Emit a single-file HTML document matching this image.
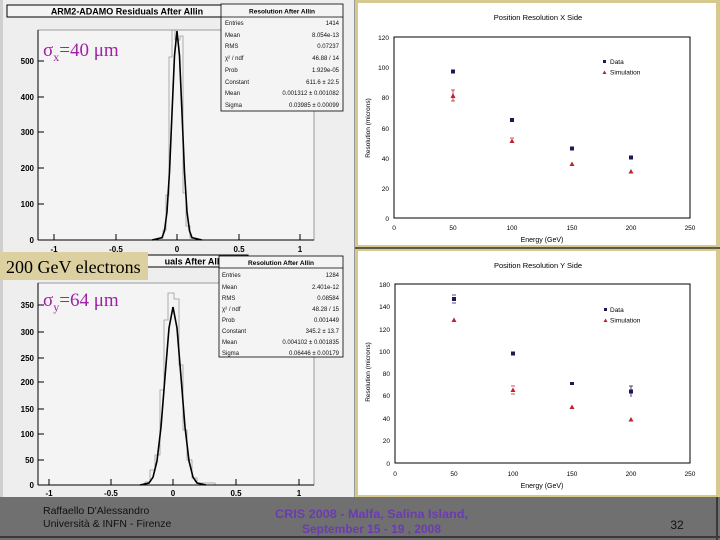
<!DOCTYPE html>
<html><head><meta charset="utf-8"><style>
html,body{margin:0;padding:0;width:720px;height:540px;overflow:hidden;background:#6f6f6f;}
svg text{font-family:"Liberation Sans",sans-serif;}
</style></head><body>
<svg width="720" height="540" xmlns="http://www.w3.org/2000/svg" style="position:absolute;left:0;top:0">
<rect x="0" y="0" width="354" height="497" fill="#eeeeee"/>
<rect x="0" y="0" width="3" height="497" fill="#cfcfcf"/>
<rect x="354" y="0" width="366" height="497" fill="#d6c98e"/>
<rect x="358" y="3" width="358" height="242" fill="#ffffff"/>
<rect x="358" y="251" width="358" height="244" fill="#ffffff"/>
<line x1="354" y1="248" x2="720" y2="248" stroke="#333" stroke-width="1.5"/>
<line x1="354.5" y1="0" x2="354.5" y2="497" stroke="#9a9a9a" stroke-width="1"/>
<rect x="0" y="497" width="720" height="43" fill="#707070"/>
<line x1="0" y1="537" x2="720" y2="537" stroke="#3a3a3a" stroke-width="2"/>
<line x1="717" y1="497" x2="717" y2="540" stroke="#3a3a3a" stroke-width="2"/>

<!-- Upper histogram -->
<rect x="38" y="30" width="276" height="210" fill="#f4f4f4" stroke="#888" stroke-width="0.8"/>
<polyline fill="none" stroke="#999" stroke-width="0.8" points="150,240 158,240 158,238 163,238 163,230 166,230 166,195 169,195 169,57 172,57 172,30 175,30 175,40 180,40 180,36 183,36 183,193 186,193 186,226 190,226 190,238 196,238 196,240 210,240"/>
<polyline fill="none" stroke="#000" stroke-width="1.6" points="152,240 162,237.7 164.5,230.8 167,211.8 169.5,172.1 172,113.1 174.5,55.7 177,31 179.5,55.7 182,113.1 184.5,172.1 187,211.8 189.5,230.8 192,237.7 202,240"/>
<g stroke="#000" stroke-width="1">
<line x1="38" y1="30" x2="38" y2="240"/><line x1="38" y1="240" x2="314" y2="240"/>
<line x1="38" y1="61" x2="44" y2="61"/><line x1="38" y1="97" x2="44" y2="97"/><line x1="38" y1="132" x2="44" y2="132"/><line x1="38" y1="168" x2="44" y2="168"/><line x1="38" y1="204" x2="44" y2="204"/>
<line x1="54" y1="240" x2="54" y2="234"/><line x1="116" y1="240" x2="116" y2="234"/><line x1="177" y1="240" x2="177" y2="234"/><line x1="239" y1="240" x2="239" y2="234"/><line x1="300" y1="240" x2="300" y2="234"/>
</g>
<g font-size="8" font-weight="bold" fill="#000" text-anchor="end">
<text x="34" y="64">500</text><text x="34" y="100">400</text><text x="34" y="135">300</text><text x="34" y="171">200</text><text x="34" y="207">100</text><text x="34" y="243">0</text>
</g>
<g font-size="8" font-weight="bold" fill="#000" text-anchor="middle">
<text x="54" y="252">-1</text><text x="116" y="252">-0.5</text><text x="177" y="252">0</text><text x="239" y="252">0.5</text><text x="300" y="252">1</text>
</g>
<rect x="7" y="5" width="241" height="12" fill="#f4f4f4" stroke="#000" stroke-width="1"/>
<text x="127" y="14.5" font-size="9" font-weight="bold" text-anchor="middle">ARM2-ADAMO Residuals After Allin</text>
<rect x="221" y="4" width="122" height="107" fill="#f4f4f4" stroke="#000" stroke-width="0.8"/>
<line x1="221" y1="17" x2="343" y2="17" stroke="#000" stroke-width="0.8"/>
<text x="282" y="13.5" font-size="6.5" font-weight="bold" text-anchor="middle">Resolution After Allin</text>
<g font-size="6" fill="#111">
<text x="225" y="25">Entries</text><text x="225" y="37">Mean</text><text x="225" y="48">RMS</text><text x="225" y="60">χ² / ndf</text><text x="225" y="72">Prob</text><text x="225" y="84">Constant</text><text x="225" y="95">Mean</text><text x="225" y="107">Sigma</text>
</g>
<g font-size="6" fill="#111" text-anchor="end">
<text x="339" y="25">1414</text><text x="339" y="37">8.054e-13</text><text x="339" y="48">0.07237</text><text x="339" y="60">46.88 / 14</text><text x="339" y="72">1.929e-05</text><text x="339" y="84">611.6 ± 22.5</text><text x="339" y="95">0.001312 ± 0.001082</text><text x="339" y="107">0.03985 ± 0.00099</text>
</g>
<text x="43" y="56" font-size="19" fill="#a020a8" style="font-family:'Liberation Serif',serif">σ<tspan font-size="12" dy="5">x</tspan><tspan dy="-5">=40 μm</tspan></text>

<!-- Lower histogram -->
<rect x="38" y="283" width="276" height="202" fill="#f4f4f4" stroke="#888" stroke-width="0.8"/>
<polyline fill="none" stroke="#999" stroke-width="0.8" points="112,485 145,485 145,482 150,482 150,470 155,470 155,455 160,455 160,390 164,390 164,320 168,320 168,293 174,293 174,299 179,299 179,365 183,365 183,430 187,430 187,460 192,460 192,478 197,478 197,483 215,483 215,485 250,485"/>
<polyline fill="none" stroke="#000" stroke-width="1.6" points="140,485 149,483 153,477.2 157,461 161,427.1 165,377 169,328 173,307 177,328 181,377 185,427.1 189,461 193,477.2 197,483 206,485"/>
<g stroke="#000" stroke-width="1">
<line x1="38" y1="283" x2="38" y2="485"/><line x1="38" y1="485" x2="314" y2="485"/>
<line x1="38" y1="305" x2="44" y2="305"/><line x1="38" y1="332" x2="44" y2="332"/><line x1="38" y1="358" x2="44" y2="358"/><line x1="38" y1="382" x2="44" y2="382"/><line x1="38" y1="409" x2="44" y2="409"/><line x1="38" y1="434" x2="44" y2="434"/><line x1="38" y1="460" x2="44" y2="460"/>
<line x1="49" y1="485" x2="49" y2="479"/><line x1="111" y1="485" x2="111" y2="479"/><line x1="173" y1="485" x2="173" y2="479"/><line x1="236" y1="485" x2="236" y2="479"/><line x1="299" y1="485" x2="299" y2="479"/>
</g>
<g font-size="8" font-weight="bold" fill="#000" text-anchor="end">
<text x="34" y="308">350</text><text x="34" y="335">300</text><text x="34" y="361">250</text><text x="34" y="385">200</text><text x="34" y="412">150</text><text x="34" y="437">100</text><text x="34" y="463">50</text><text x="34" y="488">0</text>
</g>
<g font-size="8" font-weight="bold" fill="#000" text-anchor="middle">
<text x="49" y="496">-1</text><text x="111" y="496">-0.5</text><text x="173" y="496">0</text><text x="236" y="496">0.5</text><text x="299" y="496">1</text>
</g>
<rect x="140" y="255" width="108" height="12" fill="#f4f4f4" stroke="#000" stroke-width="1"/>
<text x="196" y="264.5" font-size="9" font-weight="bold" text-anchor="middle">uals After Allin</text>
<rect x="219" y="256" width="124" height="101" fill="#f4f4f4" stroke="#000" stroke-width="0.8"/>
<line x1="219" y1="268" x2="343" y2="268" stroke="#000" stroke-width="0.8"/>
<text x="281" y="265" font-size="6.5" font-weight="bold" text-anchor="middle">Resolution After Allin</text>
<g font-size="6" fill="#111">
<text x="222" y="277">Entries</text><text x="222" y="289">Mean</text><text x="222" y="300">RMS</text><text x="222" y="311">χ² / ndf</text><text x="222" y="322">Prob</text><text x="222" y="333">Constant</text><text x="222" y="344">Mean</text><text x="222" y="355">Sigma</text>
</g>
<g font-size="6" fill="#111" text-anchor="end">
<text x="339" y="277">1284</text><text x="339" y="289">2.401e-12</text><text x="339" y="300">0.08584</text><text x="339" y="311">48.28 / 15</text><text x="339" y="322">0.001449</text><text x="339" y="333">345.2 ± 13.7</text><text x="339" y="344">0.004102 ± 0.001835</text><text x="339" y="355">0.06446 ± 0.00179</text>
</g>
<rect x="0" y="252" width="148" height="28" fill="#dccfa0"/>
<text x="6" y="273" font-size="18" fill="#000" style="font-family:'Liberation Serif',serif">200 GeV electrons</text>
<text x="43" y="306" font-size="19" fill="#a020a8" style="font-family:'Liberation Serif',serif">σ<tspan font-size="12" dy="5">y</tspan><tspan dy="-5">=64 μm</tspan></text>

<!-- Right top chart -->
<text x="538" y="20" font-size="7.5" text-anchor="middle">Position Resolution X Side</text>
<rect x="394" y="37" width="296" height="181" fill="none" stroke="#000" stroke-width="1"/>
<g font-size="6.5" text-anchor="end">
<text x="389" y="40">120</text><text x="389" y="70">100</text><text x="389" y="100">80</text><text x="389" y="131">60</text><text x="389" y="161">40</text><text x="389" y="191">20</text><text x="389" y="221">0</text>
</g>
<g font-size="6.5" text-anchor="middle">
<text x="394" y="230">0</text><text x="453" y="230">50</text><text x="512" y="230">100</text><text x="572" y="230">150</text><text x="631" y="230">200</text><text x="690" y="230">250</text>
</g>
<text x="542" y="242" font-size="7" text-anchor="middle">Energy (GeV)</text>
<text transform="translate(370,128) rotate(-90)" font-size="6.5" text-anchor="middle">Resolution (microns)</text>
<g fill="#1a1a55">
<rect x="451" y="69.5" width="4" height="4"/><rect x="510" y="118" width="4" height="4"/><rect x="570" y="146.5" width="4" height="4"/><rect x="629" y="155.5" width="4" height="4"/>
</g>
<g stroke="#c02030" stroke-width="0.8"><line x1="453" y1="90" x2="453" y2="101"/><line x1="451" y1="90" x2="455" y2="90"/><line x1="451" y1="101" x2="455" y2="101"/><line x1="510" y1="138" x2="514" y2="138"/></g>
<g fill="#c02030">
<polygon points="450.5,98 453,93 455.5,98"/><polygon points="509.5,143 512,138.5 514.5,143"/><polygon points="569.5,166 572,161.5 574.5,166"/><polygon points="628.5,173.5 631,169 633.5,173.5"/>
</g>
<rect x="603" y="60" width="3" height="3" fill="#1a1a55"/><text x="610" y="64" font-size="6.5">Data</text>
<polygon points="602.5,74 604.5,70.5 606.5,74" fill="#c02030"/><text x="610" y="74.5" font-size="6.5">Simulation</text>

<!-- Right bottom chart -->
<text x="538" y="268" font-size="7.5" text-anchor="middle">Position Resolution Y Side</text>
<rect x="395" y="284" width="295" height="179" fill="none" stroke="#000" stroke-width="1"/>
<g font-size="6.5" text-anchor="end">
<text x="390" y="287">180</text><text x="390" y="309">140</text><text x="390" y="332">120</text><text x="390" y="354">100</text><text x="390" y="376">80</text><text x="390" y="398">60</text><text x="390" y="421">40</text><text x="390" y="443">20</text><text x="390" y="466">0</text>
</g>
<g font-size="6.5" text-anchor="middle">
<text x="395" y="476">0</text><text x="454" y="476">50</text><text x="513" y="476">100</text><text x="572" y="476">150</text><text x="631" y="476">200</text><text x="690" y="476">250</text>
</g>
<text x="542" y="488" font-size="7" text-anchor="middle">Energy (GeV)</text>
<text transform="translate(370,372) rotate(-90)" font-size="6.5" text-anchor="middle">Resolution (microns)</text>
<g fill="#1a1a55">
<rect x="452" y="297" width="4" height="4"/><rect x="511" y="351.5" width="4" height="4"/><rect x="570" y="382" width="4" height="3"/><rect x="629" y="389.5" width="4" height="4"/>
</g>
<g stroke="#1a1a55" stroke-width="0.8"><line x1="452" y1="295" x2="456" y2="295"/><line x1="452" y1="303" x2="456" y2="303"/><line x1="631" y1="386" x2="631" y2="397"/><line x1="629" y1="386" x2="633" y2="386"/></g>
<g stroke="#c02030" stroke-width="0.8"><line x1="511" y1="386" x2="515" y2="386"/><line x1="511" y1="394" x2="515" y2="394"/></g>
<g fill="#c02030">
<polygon points="451.5,322 454,317.5 456.5,322"/><polygon points="510.5,392 513,387.5 515.5,392"/><polygon points="569.5,409 572,404.5 574.5,409"/><polygon points="628.5,421.5 631,417 633.5,421.5"/>
</g>
<rect x="604" y="308" width="3" height="3" fill="#1a1a55"/><text x="610" y="312" font-size="6.5">Data</text>
<polygon points="603.5,322 605.5,318.5 607.5,322" fill="#c02030"/><text x="610" y="322.5" font-size="6.5">Simulation</text>

<!-- footer -->
<text x="43" y="514" font-size="10.5" fill="#111">Raffaello D'Alessandro</text>
<text x="43" y="527" font-size="10.5" fill="#111">Università &amp; INFN - Firenze</text>
<text x="275" y="518" font-size="11.5" font-weight="bold" fill="#6a3cb0" textLength="193" lengthAdjust="spacingAndGlyphs">CRIS 2008 -    Malfa, Salina Island,</text>
<text x="302" y="533" font-size="11.5" font-weight="bold" fill="#6a3cb0" textLength="139" lengthAdjust="spacingAndGlyphs">September 15 - 19 , 2008</text>
<text x="677" y="529" font-size="12" fill="#111" text-anchor="middle">32</text>
</svg>
</body></html>
